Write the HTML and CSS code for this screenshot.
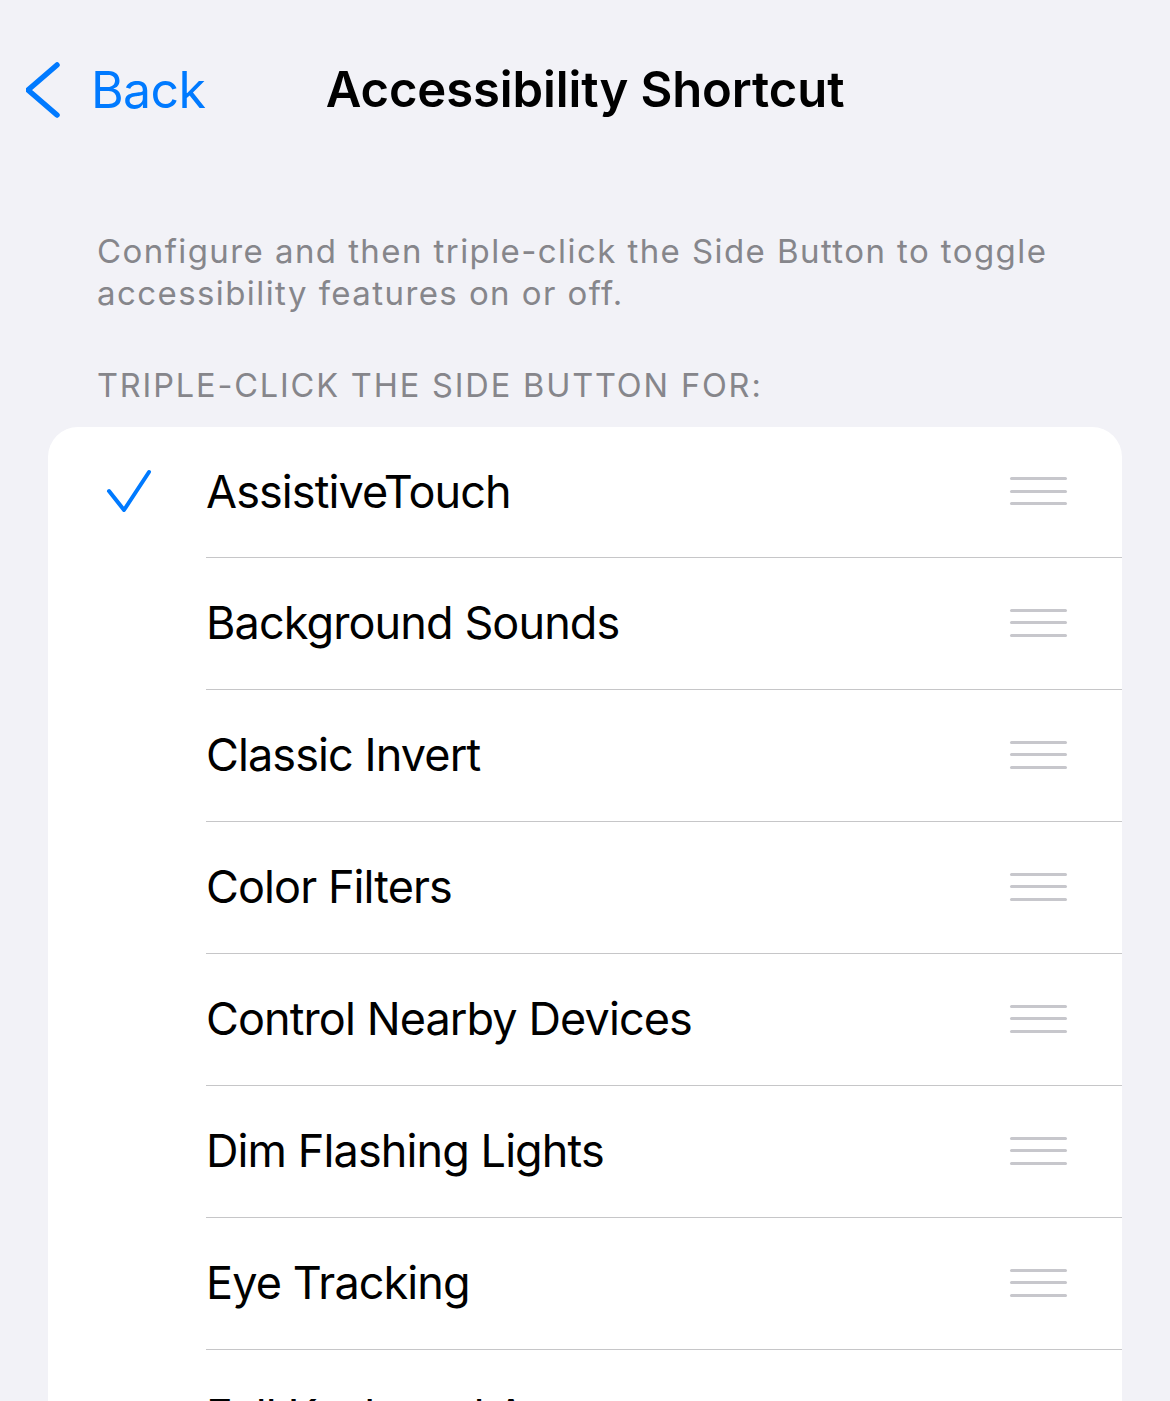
FILE: index.html
```html
<!DOCTYPE html>
<html>
<head>
<meta charset="utf-8">
<link rel="stylesheet" href="styles.css">
</head>
<body>
<div class="nav">
  <div class="back">
    <svg class="chev" width="40" height="60" viewBox="0 0 40 60"><polyline points="31,5 2,30 31,55" fill="none" stroke="#007aff" stroke-width="5.5" stroke-linecap="round" stroke-linejoin="round"/></svg>
    <span class="back-text">Back</span>
  </div>
  <div class="title">Accessibility Shortcut</div>
  <div></div>
</div>
<p class="desc">Configure and then triple-click the Side Button to toggle accessibility features on or off.</p>
<div class="section-header">TRIPLE-CLICK THE SIDE BUTTON FOR:</div>
<div class="card">
  <div class="row">
    <div class="check-cell"><svg width="48" height="48" viewBox="0 0 48 48"><polyline points="3,22 18,41 43,3" fill="none" stroke="#007aff" stroke-width="4" stroke-linecap="round" stroke-linejoin="round"/></svg></div>
    <div class="row-body"><span class="label">AssistiveTouch</span><span class="handle"><i></i><i></i><i></i></span></div>
  </div>
  <div class="row">
    <div class="check-cell"></div>
    <div class="row-body"><span class="label">Background Sounds</span><span class="handle"><i></i><i></i><i></i></span></div>
  </div>
  <div class="row">
    <div class="check-cell"></div>
    <div class="row-body"><span class="label">Classic Invert</span><span class="handle"><i></i><i></i><i></i></span></div>
  </div>
  <div class="row">
    <div class="check-cell"></div>
    <div class="row-body"><span class="label">Color Filters</span><span class="handle"><i></i><i></i><i></i></span></div>
  </div>
  <div class="row">
    <div class="check-cell"></div>
    <div class="row-body"><span class="label">Control Nearby Devices</span><span class="handle"><i></i><i></i><i></i></span></div>
  </div>
  <div class="row">
    <div class="check-cell"></div>
    <div class="row-body"><span class="label">Dim Flashing Lights</span><span class="handle"><i></i><i></i><i></i></span></div>
  </div>
  <div class="row">
    <div class="check-cell"></div>
    <div class="row-body"><span class="label">Eye Tracking</span><span class="handle"><i></i><i></i><i></i></span></div>
  </div>
  <div class="row">
    <div class="check-cell"></div>
    <div class="row-body"><span class="label">Full Keyboard Access</span><span class="handle"><i></i><i></i><i></i></span></div>
  </div>
</div>
</body>
</html>
```
FILE: styles.css
```css
html, body {
  margin: 0;
  padding: 0;
  background: #f2f2f7;
  font-family: Inter, "Noto Sans", sans-serif;
  overflow: hidden;
  height: 1401px;
}
.nav {
  display: grid;
  grid-template-columns: 1fr auto 1fr;
  align-items: center;
  padding-top: 60px;
  height: 60px;
}
.back {
  display: flex;
  align-items: center;
  padding-left: 26px;
  color: #007aff;
}
.chev {
  display: block;
}
.back-text {
  margin-left: 25px;
  font-size: 50px;
  line-height: 60px;
  font-weight: 400;
  letter-spacing: -0.6px;
}
.title {
  font-size: 49px;
  line-height: 60px;
  font-weight: 600;
  color: #000;
  letter-spacing: -0.1px;
}
.desc {
  margin: 110px 0 0;
  padding: 0 60px 0 97px;
  font-size: 33px;
  line-height: 42px;
  color: #86868b;
  letter-spacing: 1.42px;
}
.section-header {
  margin-top: 52px;
  padding-left: 97px;
  font-size: 32.5px;
  line-height: 40px;
  color: #86868b;
  letter-spacing: 1.85px;
}
.card {
  margin: 21px 48px 0;
  background: #fff;
  border-radius: 30px 30px 0 0;
}
.row {
  display: flex;
  height: 132px;
}
.row:first-child {
  height: 131px;
}
.check-cell {
  width: 158px;
  flex: none;
  display: flex;
  align-items: center;
  padding-left: 58px;
  box-sizing: border-box;
}
.check-cell svg {
  display: block;
}
.row-body {
  flex: 1;
  display: flex;
  align-items: center;
  justify-content: space-between;
  border-bottom: 1.5px solid #c6c6c8;
  padding-left: 0;
  padding-right: 55px;
  padding-bottom: 2px;
}
.row:last-child .row-body {
  border-bottom: none;
}
.label {
  font-size: 45px;
  color: #000;
  letter-spacing: -0.9px;
}
.handle {
  display: flex;
  flex-direction: column;
  gap: 9.5px;
  width: 57px;
}
.handle i {
  display: block;
  height: 3px;
  border-radius: 2px;
  background: #c7c7cc;
}
```
